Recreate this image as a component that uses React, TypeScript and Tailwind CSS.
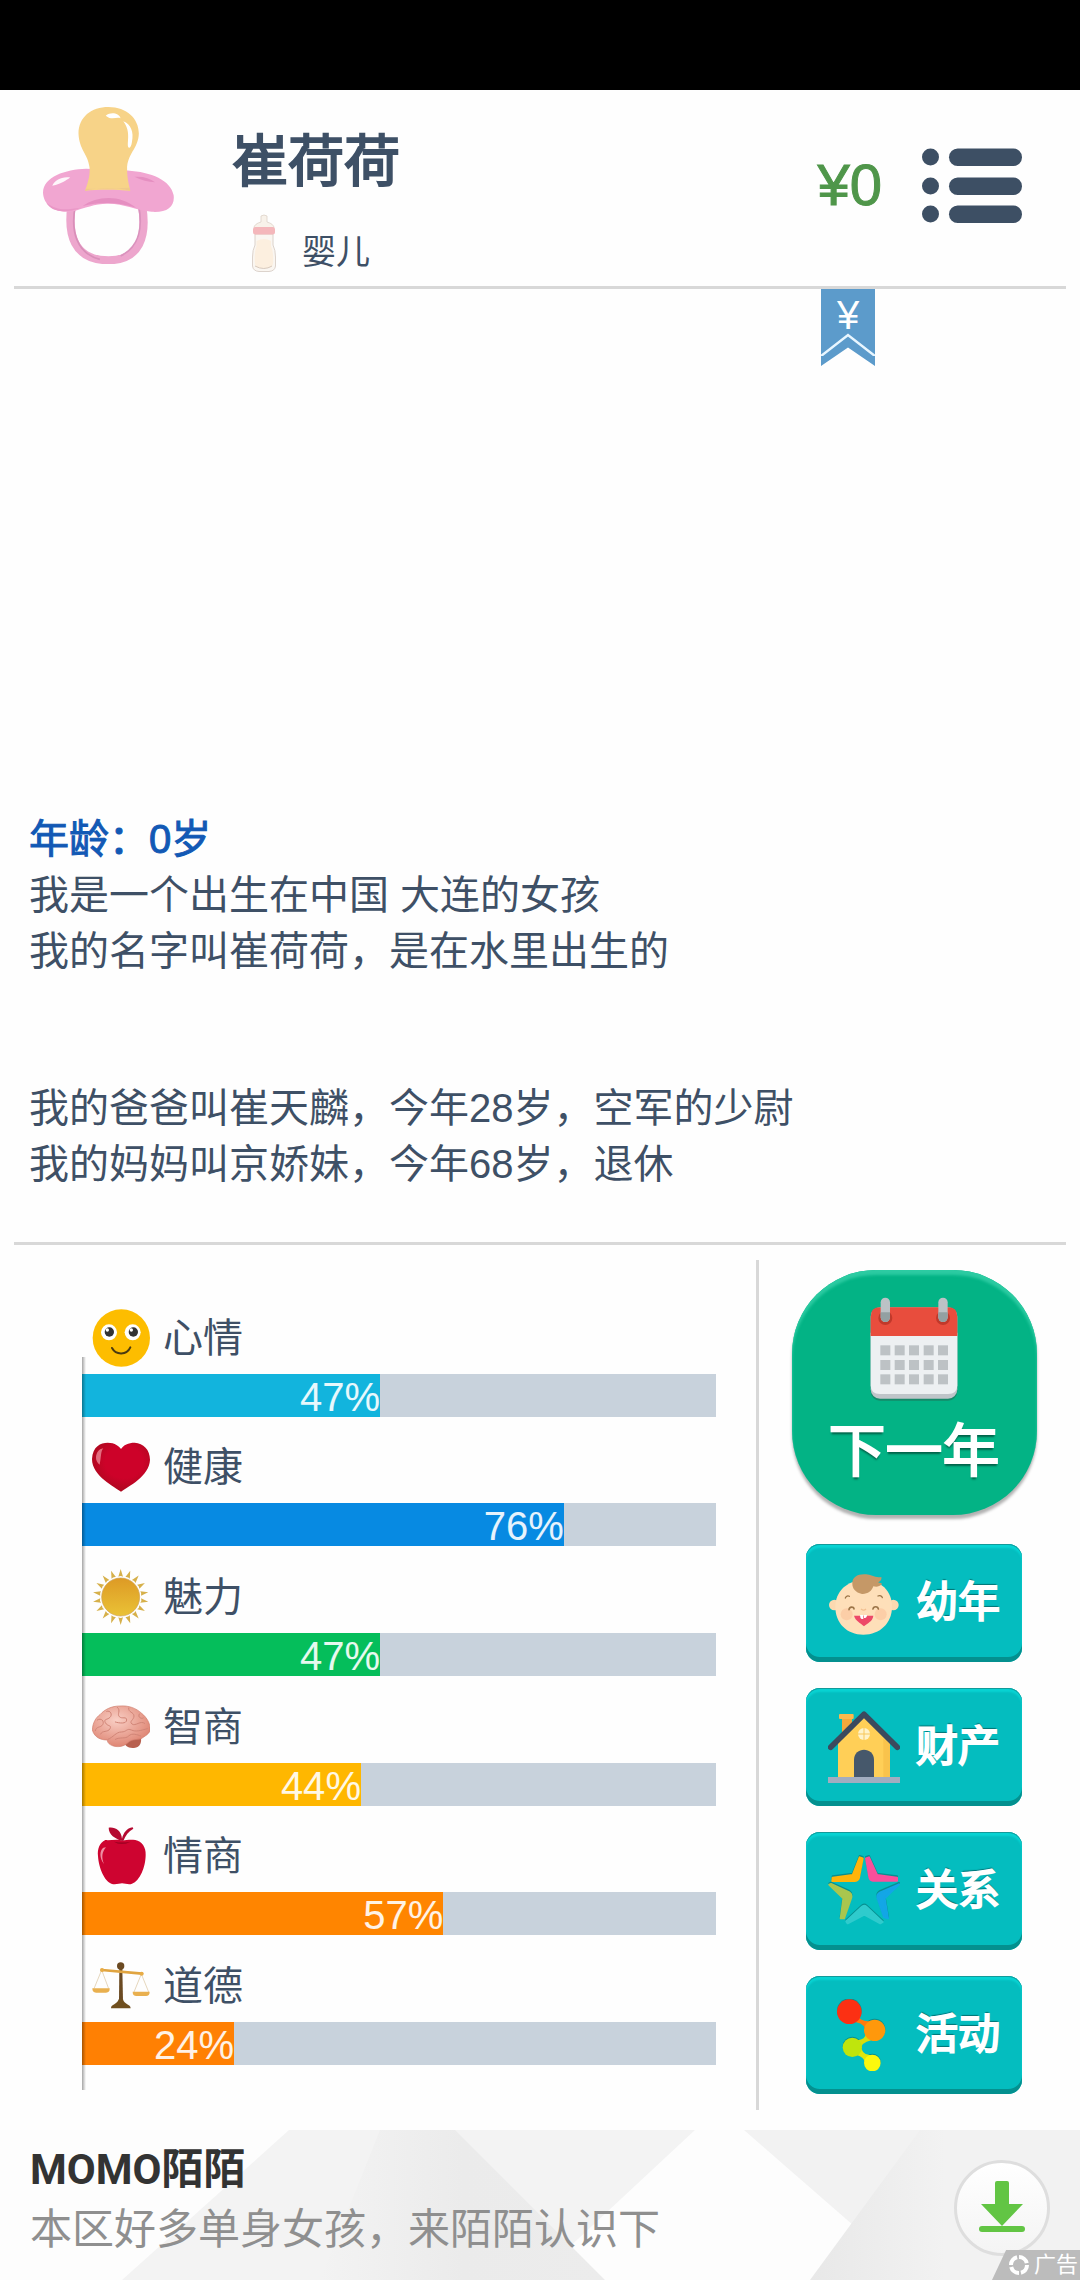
import type { ReactNode } from "react";

interface Stat {
    id: string;
    label: string;
    value: number;
    fill: string;
    icon: ReactNode;
}

interface Action {
    id: string;
    label: string;
    icon: ReactNode;
}

const LOG_LINES = [
    ["我是一个出生在中国 大连的女孩", "我的名字叫崔荷荷，是在水里出生的"],
    ["我的爸爸叫崔天麟，今年28岁，空军的少尉", "我的妈妈叫京娇妹，今年68岁，退休"],
];

function PacifierIcon() {
    return (
        <svg className="h-[157px] w-[131px] shrink-0" viewBox="125 80 380 472" preserveAspectRatio="none" aria-hidden="true">
            <path d="M208 375C196 460 212 540 315 541C405 540 428 470 412 375" fill="none" stroke="#eda6cd" strokeWidth="24" />
            <path d="M218 380C206 450 220 520 290 538" fill="none" stroke="#d98fb9" strokeWidth="5" />
            <path d="M403 380C414 440 405 500 350 528" fill="none" stroke="#da92bd" strokeWidth="5" />
            <path d="M250 266C190 268 126 290 125 338C127 380 165 400 210 394C250 384 275 370 316 371C358 371 400 392 440 395C485 398 508 380 504 345C495 300 440 276 370 271Z" fill="#f1a6d1" />
            <path d="M240 378C285 345 350 345 395 383C345 366 290 364 240 378Z" fill="#e58fc1" />
            <path d="M135 368C165 392 190 390 235 383C190 401 150 396 135 368Z" fill="#e997c6" />
            <path d="M152 317C158 300 180 288 204 292C190 302 180 310 152 317Z" fill="#fff" opacity=".9" />
            <path d="M390 290C415 288 435 294 450 306C430 306 410 300 390 290Z" fill="#e58fc1" />
            <path d="M228 160C228 110 265 80 315 80C368 80 403 115 403 160C402 205 368 222 369 268C369 295 374 310 378 332C340 328 290 327 247 332C256 305 262 285 260 262C255 220 230 210 228 160Z" fill="#f7d388" />
            <path d="M247 332C290 320 340 322 378 332L376 323C330 326 290 326 250 326Z" fill="#efc98b" />
            <path d="M307 106C322 94 345 98 350 114C338 108 326 122 307 106Z" fill="#fff" />
            <path d="M358 123C380 132 389 155 383 185C381 205 370 210 371 190C373 165 374 145 358 123Z" fill="#fff" />
        </svg>
    );
}

function BottleIcon() {
    return (
        <svg className="h-[58px] w-6 shrink-0" viewBox="0 0 24 58" aria-hidden="true">
            <path d="M9 8V2Q12 0 15 2V8Q22 10 22 14H2Q2 10 9 8Z" fill="#f8f2ea" stroke="#ddd2c8" strokeWidth=".8" />
            <path d="M3 20H21V31Q23.500 36 23.500 43V52Q23 57 17 57.500H7Q1 57 .5 52V43Q.5 36 3 31Z" fill="#faf6f1" stroke="#d8cec6" strokeWidth=".9" />
            <path d="M4.500 27Q12 23 19 27V32Q22 38 21 50Q20 54 16 54H8Q4 54 3 50Q2 38 4.500 32Z" fill="#fcefdf" />
            <rect x="1" y="13" width="22" height="7.500" rx="2.500" fill="#f4b7bb" />
            <path d="M3 52Q12 57 20 52" fill="none" stroke="#d2c4b8" strokeWidth=".9" />
        </svg>
    );
}

function MenuIcon() {
    return (
        <svg className="h-[75px] w-[100px]" viewBox="0 0 100 75" fill="#3d4f64" aria-hidden="true">
            {[0, 29, 57].map((y) => (
                <g key={y}>
                    <circle cx="8.500" cy={y + 9} r="8.500" />
                    <rect x="27" y={y + 0.5} width="73" height="17.500" rx="8.700" />
                </g>
            ))}
        </svg>
    );
}

function StatIcon({ viewBox, children }: { viewBox: string; children: ReactNode }) {
    return (
        <svg className="size-[58px] shrink-0" viewBox={viewBox} aria-hidden="true">
            {children}
        </svg>
    );
}

const SUN_RAYS = Array.from({ length: 18 }, (_, i) => i * 20);

const moodIcon = (
    <StatIcon viewBox="96 56 174 174">
        <circle cx="184" cy="143" r="86" fill="#fdbd00" />
        <circle cx="147" cy="126" r="24" fill="#fff" />
        <circle cx="218" cy="126" r="24" fill="#fff" />
        <circle cx="148" cy="125" r="14" fill="#333" />
        <circle cx="220" cy="125" r="14" fill="#333" />
        <circle cx="142" cy="119" r="5" fill="#fff" />
        <circle cx="214" cy="119" r="5" fill="#fff" />
        <path d="M156 173C168 195 200 195 211 171" fill="none" stroke="#4a3a10" strokeWidth="6" strokeLinecap="round" />
    </StatIcon>
);

const healthIcon = (
    <StatIcon viewBox="96 445 174 174">
        <defs>
            <radialGradient id="heart" cx=".55" cy=".4" r=".65">
                <stop offset=".5" stopColor="#cd0229" />
                <stop offset="1" stopColor="#a50a1c" />
            </radialGradient>
        </defs>
        <path d="M183 606C165 592 96 560 96 508C98 470 122 459 143 459C165 459 178 470 183 478C190 466 205 459 224 459C250 460 270 480 270 510C268 560 205 590 183 606Z" fill="url(#heart)" />
        <path d="M108 505C108 490 116 478 130 476C122 484 124 500 119 525C112 520 108 512 108 505Z" fill="#ef8f9c" opacity=".75" />
    </StatIcon>
);

const charmIcon = (
    <StatIcon viewBox="96 835 174 174">
        <defs>
            <linearGradient id="sun" x1="0" y1="0" x2="0" y2="1">
                <stop offset="0" stopColor="#dd9a25" />
                <stop offset="1" stopColor="#eac236" />
            </linearGradient>
        </defs>
        {SUN_RAYS.map((a) => (
            <path key={a} d="M175 861L182 838L189 861Q182 857 175 861Z" fill="#d6b04a" transform={`rotate(${a} 182 922)`} />
        ))}
        <circle cx="182" cy="922" r="57" fill="url(#sun)" stroke="#cfa253" strokeWidth="2" />
    </StatIcon>
);

const brainIcon = (
    <StatIcon viewBox="96 54 174 174">
        <defs>
            <radialGradient id="brain" cx=".42" cy=".35" r=".65">
                <stop offset="0" stopColor="#f9cfc5" />
                <stop offset="1" stopColor="#df8674" />
            </radialGradient>
        </defs>
        <path d="M196 184C190 196 205 206 222 204C242 202 246 184 242 170Z" fill="#b8604f" />
        <path d="M97 150C98 128 108 112 120 104C134 88 155 78 180 78C205 76 228 84 245 100C262 114 272 132 270 152C266 164 254 168 244 176C226 180 214 178 204 188C192 200 174 202 160 198C148 194 142 188 142 180C124 180 104 174 97 150Z" fill="url(#brain)" stroke="#cf7b6b" strokeWidth="2" />
        <g fill="none" stroke="#d18577" strokeWidth="3" strokeLinecap="round">
            <path d="M112 120C124 112 134 124 128 134S108 138 106 152" />
            <path d="M140 94C152 90 158 104 150 112S130 116 136 128S156 134 150 146S126 150 122 162" />
            <path d="M172 82C184 92 170 102 178 110S200 108 200 120S178 130 166 126" />
            <path d="M206 84C204 98 222 96 222 108S206 124 216 132S242 120 254 130" />
            <path d="M144 178C160 172 168 156 184 156S200 144 214 150S240 152 262 146" />
            <path d="M166 178C180 170 196 178 206 168S232 164 242 168" />
            <path d="M238 102C232 112 244 118 250 114" />
        </g>
    </StatIcon>
);

const appleIcon = (
    <StatIcon viewBox="96 443 174 174">
        <path d="M187 484C172 478 150 484 136 482C118 490 112 510 114 530C116 566 134 606 154 613C166 617 178 612 186 612C196 612 206 617 216 613C240 604 257 562 257 526C258 504 246 486 226 482C210 480 200 482 187 484Z" fill="#ce0430" />
        <path d="M184 484C166 478 146 466 146 445C164 442 184 452 186 478C190 462 200 446 218 444L220 448C206 456 196 468 190 485Z" fill="#b50a31" />
        <path d="M130 505C118 514 118 536 132 554C124 534 126 518 138 504Z" fill="#ee8fa3" />
        <path d="M162 487Q184 500 212 487Q186 492 162 487Z" fill="#92001e" />
    </StatIcon>
);

const scalesIcon = (
    <StatIcon viewBox="96 833 174 174">
        <g fill="none" stroke="#d9c29c" strokeWidth="2">
            <path d="M125 872L102 928M125 872L146 928M244 884L222 938M244 884L266 938" />
        </g>
        <path d="M178 868H187L189 964H177Z" fill="#6b4a22" />
        <path d="M126 872L246 883" stroke="#e0a440" strokeWidth="8" strokeLinecap="round" />
        <circle cx="126" cy="872" r="6" fill="#e8ac45" />
        <circle cx="245" cy="883" r="6" fill="#e8ac45" />
        <path d="M97 927H149Q150 940 138 940H108Q97 940 97 927Z" fill="#e9b04f" />
        <path d="M218 937H269Q269 950 258 950H229Q218 950 218 937Z" fill="#e9b04f" />
        <circle cx="182" cy="860" r="11" fill="#6b4a22" />
        <path d="M153 987C153 974 172 976 176 960H189C192 976 212 974 212 987Z" fill="#70501f" />
    </StatIcon>
);

const STATS: Stat[] = [
    { id: "mood",    label: "心情", value: 47, fill: "bg-[#12b4dd]", icon: moodIcon },
    { id: "health",  label: "健康", value: 76, fill: "bg-[#078ae2]", icon: healthIcon },
    { id: "charm",   label: "魅力", value: 47, fill: "bg-[#05be5b]", icon: charmIcon },
    { id: "iq",      label: "智商", value: 44, fill: "bg-[#ffb700]", icon: brainIcon },
    { id: "eq",      label: "情商", value: 57, fill: "bg-[#ff8500]", icon: appleIcon },
    { id: "morals",  label: "道德", value: 24, fill: "bg-[#ff8003]", icon: scalesIcon },
];

function ActionIcon({ viewBox, children }: { viewBox: string; children: ReactNode }) {
    return (
        <svg className="size-[72px] shrink-0" viewBox={viewBox} aria-hidden="true">
            {children}
        </svg>
    );
}

const STAR_ARMS = [
    { fill: "#ffb40a", d: "M134 67L143 70L132 128Q129 138 118 138H52L53 128L113 120Z" },
    { fill: "#fa4f9b", d: "M153 70L162 67L186 120L246 128V137H174Q165 136 163 126Z" },
    { fill: "#a9c64e", d: "M43 149L48 147L103 172Q112 178 108 190L87 250L77 250L85 190Z" },
    { fill: "#13a6e6", d: "M252 148L196 172Q184 178 188 190L207 246L219 250L209 190Z" },
    { fill: "#2fcbcd", d: "M94 259L140 216Q147 209 155 216L203 261L196 265L148 239L98 265Z" },
];

const ACTIONS: Action[] = [
    {
        id: "childhood",
        label: "幼年",
        icon: (
            <ActionIcon viewBox="144 108 216 216">
                <circle cx="163" cy="222" r="16" fill="#fcd9b0" />
                <circle cx="340" cy="222" r="16" fill="#fcd9b0" />
                <path d="M252 148C304 148 336 180 336 228C336 276 300 311 250 311C200 311 166 276 166 228C166 182 200 148 252 148Z" fill="#fedfb9" />
                <circle cx="200" cy="250" r="18" fill="#fbc6a0" opacity=".7" />
                <circle cx="302" cy="250" r="18" fill="#fbc6a0" opacity=".7" />
                <path d="M217 158C216 138 234 128 258 130C274 131 286 142 304 138C306 146 300 152 294 154C300 156 306 156 306 160C298 168 288 168 280 166C276 180 262 190 246 189C226 184 217 172 217 158Z" fill="#c59867" />
                <g fill="none" stroke="#9b7448" strokeWidth="5" strokeLinecap="round">
                    <path d="M207 236C208 226 222 226 222 234M279 234C280 225 294 225 295 234" />
                    <path d="M196 201C198 195 204 193 208 196M294 195C300 192 306 196 307 200" strokeWidth="4" />
                </g>
                <path d="M243 234Q251 241 258 234" fill="none" stroke="#f2bf91" strokeWidth="4" />
                <path d="M222 254H280C278 272 262 276 252 286C242 276 226 270 222 254Z" fill="#ed4868" />
                <path d="M240 252H250V264H245Q240 262 240 252ZM252 252H261Q261 260 256 261H252Z" fill="#fff" />
            </ActionIcon>
        ),
    },
    {
        id: "assets",
        label: "财产",
        icon: (
            <ActionIcon viewBox="144 542 216 216">
                <path d="M186 564H216V600L186 625Z" fill="#f3a83c" />
                <rect x="177" y="551" width="44" height="15" rx="3" fill="#fdb94b" />
                <path d="M174 635L252 560L330 635V741H174Z" fill="#ffcf57" />
                <path d="M310 625L330 640V741H310Z" fill="#f9c34c" />
                <path d="M152 651L252 552L352 651" fill="none" stroke="#3b4a5e" strokeWidth="17" strokeLinecap="round" strokeLinejoin="round" />
                <path d="M222 741V688C222 648 282 648 282 688V741Z" fill="#46586b" />
                <circle cx="252" cy="611" r="18" fill="#fff3c9" />
                <path d="M252 593V629M234 611H270" stroke="#f7c75b" strokeWidth="3" />
                <rect x="144" y="740" width="216" height="18" fill="#a2adc0" />
            </ActionIcon>
        ),
    },
    {
        id: "relations",
        label: "关系",
        icon: (
            <ActionIcon viewBox="39 60 216 216">
                {STAR_ARMS.map((arm) => (
                    <path key={`${arm.fill}-edge`} d={arm.d} transform="translate(0 -4)" fill="#078f90" stroke="#078f90" strokeWidth="6" strokeLinejoin="round" />
                ))}
                {STAR_ARMS.map((arm) => (
                    <path key={arm.fill} d={arm.d} fill={arm.fill} stroke={arm.fill} strokeWidth="6" strokeLinejoin="round" />
                ))}
            </ActionIcon>
        ),
    },
    {
        id: "activities",
        label: "活动",
        icon: (
            <ActionIcon viewBox="144 536 216 216">
                <g fill="#078f90" transform="translate(0 -3)">
                    <circle cx="208" cy="574" r="37" />
                    <circle cx="284" cy="630" r="32" />
                    <circle cx="217" cy="681" r="29" />
                    <circle cx="277" cy="728" r="25" />
                </g>
                <path d="M232 584Q244 606 272 602L258 646Q262 612 228 606Z" fill="#ff7a0c" />
                <path d="M256 634Q262 656 232 660L242 690Q242 666 274 660Z" fill="#d9dd0c" />
                <path d="M242 672Q244 706 272 704L256 728Q252 710 230 704Z" fill="#e0e60d" />
                <circle cx="208" cy="574" r="37" fill="#fc3013" />
                <circle cx="284" cy="630" r="32" fill="#ff980b" />
                <circle cx="217" cy="681" r="29" fill="#bfe50c" />
                <circle cx="277" cy="728" r="25" fill="#fbf80d" />
            </ActionIcon>
        ),
    },
];

function CalendarIcon() {
    return (
        <svg className="h-[104px] w-[88px]" viewBox="391 173 264 312" aria-hidden="true">
            <rect x="393" y="220" width="260" height="264" rx="28" fill="#168a6a" />
            <rect x="393" y="204" width="260" height="274" rx="28" fill="#bfc5c9" />
            <path d="M393 280H653V438Q653 464 625 464H421Q393 464 393 438Z" fill="#edf0f2" />
            <path d="M393 290V232Q393 204 421 204H625Q653 204 653 232V290Z" fill="#e84d3d" />
            {[437, 610].map((x) => (
                <g key={x}>
                    <circle cx={x} cy="236" r="21" fill="#c0392b" />
                    <rect x={x - 14} y="175" width="28" height="73" rx="14" fill="#bcc2c6" />
                    <path d={`M${x - 14} 219H${x + 14}V234A14 14 0 0 1 ${x - 14} 234Z`} fill="#93a0a2" />
                </g>
            ))}
            {[318, 362, 405].map((y) =>
                [422, 465, 508, 552, 595].map((x) => (
                    <rect key={`${x}-${y}`} x={x} y={y} width="30" height="30" fill="#bdc2c5" />
                ))
            )}
        </svg>
    );
}

function StatRow({ stat }: { stat: Stat }) {
    return (
        <div className="flex flex-1 flex-col justify-end">
            <div className="flex items-center gap-[13px] pb-[7px] pl-2.5">
                {stat.icon}
                <span id={stat.id} className="text-[40px] leading-[56px]">{stat.label}</span>
            </div>
            <div role="progressbar" aria-labelledby={stat.id} aria-valuenow={stat.value} className="h-[43px] bg-[#c8d2dc]">
                <div className={`flex h-full items-end justify-end ${stat.fill}`} style={{ width: `${stat.value}%` }}>
                    <span className="text-[40px] leading-[40px] text-white/90">{stat.value}%</span>
                </div>
            </div>
        </div>
    );
}

function AdBackground() {
    return (
        <svg className="absolute inset-0 h-full w-full" viewBox="0 0 1080 150" preserveAspectRatio="none" aria-hidden="true">
            <defs>
                <linearGradient id="adLeft" x1="0" x2="1">
                    <stop offset="0" stopColor="#f3f3f3" />
                    <stop offset=".5" stopColor="#ebebeb" />
                    <stop offset="1" stopColor="#ececec" />
                </linearGradient>
                <linearGradient id="adRight" x1="0" x2="1">
                    <stop offset="0" stopColor="#e8e8e8" />
                    <stop offset=".5" stopColor="#f2f2f2" />
                </linearGradient>
            </defs>
            <path d="M0 0H1080V150H0Z" fill="#fdfdfd" />
            <path d="M289 0H695L534 150H122Z" fill="#f3f3f3" />
            <path d="M380 0H455L605 150H320Z" fill="url(#adLeft)" />
            <path d="M744 0H1080V150H916Z" fill="#f2f2f2" />
            <path d="M920 0H1080V150H810Z" fill="url(#adRight)" />
        </svg>
    );
}

export default function App() {
    return (
        <div
            lang="zh-CN"
            className="flex min-h-screen w-full flex-col bg-[#fefefe] font-['Liberation_Sans','Noto_Sans_CJK_SC',sans-serif] text-[#3e5066]"
        >
            {/* status bar */}
            <div className="h-[90px] shrink-0 bg-black" />

            <header className="mx-3.5 flex h-[199px] shrink-0 items-center border-b-[3px] border-[#d8d8d8] pb-1.5 pl-[29px] pr-11">
                <PacifierIcon />
                <div className="ml-[58px] flex-1 pt-8">
                    <h1 className="text-[56px] leading-[64px] [-webkit-text-stroke:2px]">崔荷荷</h1>
                    <div className="mt-5 flex items-end gap-[26px] pl-5">
                        <BottleIcon />
                        <span className="text-[34px] leading-[40px]">婴儿</span>
                    </div>
                </div>
                <span className="text-[58px] leading-[64px] text-[#4f964a] [-webkit-text-stroke:1px]">¥0</span>
                <button type="button" aria-label="菜单" className="ml-10">
                    <MenuIcon />
                </button>
            </header>

            {/* life log */}
            <main className="flex flex-1 flex-col px-[29px]">
                <button
                    type="button"
                    aria-label="金钱"
                    className="mr-[176px] flex h-[77px] w-[54px] justify-center self-end bg-[#5c9bcb] [clip-path:polygon(0_0,100%_0,100%_100%,50%_76%,0_100%)]"
                >
                    <span className="flex flex-col items-center">
                        <span className="pt-2 text-[40px] leading-[36px] text-white">¥</span>
                        <svg className="h-[23px] w-[54px]" viewBox="0 0 54 23" fill="none" aria-hidden="true">
                            <path d="M0 23L27 2L54 23" stroke="#e8f6ff" strokeWidth="2.500" />
                        </svg>
                    </span>
                </button>
                <div className="mt-auto pb-[50px] text-[40px] leading-[56px]">
                    <h2 className="text-[#1259b5] [-webkit-text-stroke:1px]">年龄：0岁</h2>
                    <div className="flex flex-col gap-[101px]">
                        {LOG_LINES.map((group) => (
                            <div key={group[0]}>
                                {group.map((line) => (
                                    <p key={line}>{line}</p>
                                ))}
                            </div>
                        ))}
                    </div>
                </div>
            </main>

            {/* stats + actions */}
            <section className="mx-3.5 flex shrink-0 border-t-[3px] border-[#d8d8d8]">
                <div className="relative ml-[68px] mr-10 flex flex-1 flex-col pb-[65px] pt-[42px]">
                    {STATS.map((stat) => (
                        <StatRow key={stat.id} stat={stat} />
                    ))}
                    <div className="absolute bottom-10 left-0 top-28 w-1 bg-gradient-to-r from-black/35 to-transparent" />
                </div>
                <div className="mb-5 mt-[15px] w-[3px] bg-[#d8d8d8]" />
                <div className="flex w-[307px] flex-col items-center gap-[26px] pb-9 pl-[3px] pt-[25px]">
                    <button
                        type="button"
                        className="mb-[3px] flex size-[245px] flex-col items-center rounded-[84px] bg-[#03b385] pt-[27px] text-white shadow-[0_4px_3px_rgba(0,0,0,0.3),inset_0_5px_3px_#2ccba2]"
                    >
                        <CalendarIcon />
                        <span className="mt-[18px] text-[57px] leading-[64px] [-webkit-text-stroke:2px] [text-shadow:0_3px_2px_rgba(0,0,0,0.45)]">下一年</span>
                    </button>
                    {ACTIONS.map((action) => (
                        <button
                            key={action.id}
                            type="button"
                            className="flex h-[118px] w-[216px] items-center gap-4 rounded-[14px] bg-[#04bdbf] pl-[22px] text-white shadow-[inset_0_-5px_0_#04908f,inset_0_1px_0_#129a9a,inset_0_4px_2px_#08d3d3]"
                        >
                            {action.icon}
                            <span className="text-[42px] leading-[56px] [-webkit-text-stroke:2px] [text-shadow:0_-2px_1px_rgba(0,0,0,0.4)]">{action.label}</span>
                        </button>
                    ))}
                </div>
            </section>

            {/* ad banner */}
            <aside className="relative flex h-[150px] shrink-0 items-start justify-between overflow-hidden pl-[30px] pr-[30px]">
                <AdBackground />
                <a href="#momo" className="relative pt-2.5 text-[42px] leading-[60px]">
                    <strong className="block font-['Roboto','Noto_Sans_CJK_SC',sans-serif] font-bold text-[#333]">MOMO陌陌</strong>
                    <span className="block text-[#8f8f8f]">本区好多单身女孩，来陌陌认识下</span>
                </a>
                <button
                    type="button"
                    aria-label="下载"
                    className="relative mt-[30px] flex size-24 items-center justify-center rounded-full border-[3px] border-[#dedede] bg-gradient-to-b from-white to-[#f4f4f4]"
                >
                    <svg className="mb-1 h-[52px] w-[46px]" viewBox="0 0 46 52" fill="#62c544" aria-hidden="true">
                        <path d="M18 1H28Q30 1 30 3V24H44L23 46L2 24H16V3Q16 1 18 1Z" />
                        <rect x="0" y="46" width="46" height="6" rx="3" />
                    </svg>
                </button>
                <div className="absolute bottom-0 right-0 flex h-[30px] items-center gap-1 bg-[#bcbcbc] pl-4 pr-0.5 text-[22px] leading-[30px] text-white [clip-path:polygon(16%_0,100%_0,100%_100%,0_100%)]">
                    <svg className="size-[22px]" viewBox="0 0 22 22" fill="none" aria-hidden="true">
                        <circle cx="11" cy="11" r="8" stroke="#fff" strokeWidth="4" strokeDasharray="10.500 2" />
                    </svg>
                    广告
                </div>
            </aside>
        </div>
    );
}
